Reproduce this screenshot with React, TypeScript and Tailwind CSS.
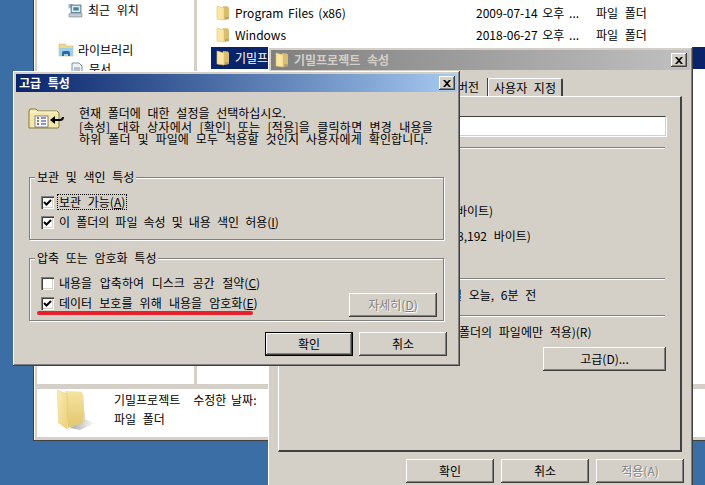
import React from "react";

const bevel = "shadow-[inset_-1px_-1px_#404040,inset_1px_1px_#ffffff,inset_-2px_-2px_#808080,inset_2px_2px_#d4d0c8]";
const fontCls = "font-['Noto_Sans_CJK_KR','Liberation_Sans',sans-serif] [word-spacing:4px] text-[12px] leading-[14px] text-black";

function Folder({ className = "" }: { className?: string }) {
  return (
    <svg viewBox="0 0 14 16" className={className}>
      <path d="M7 1 L12 1.5 L13 3 L13 14 L7 15 Z" fill="#d9bd6e" />
      <path d="M1 1 L8 3 L8 15 L1 14 Z" fill="#f8e6a2" />
      <path d="M1 1 L8 3 L8 15 L1 14 Z" fill="none" stroke="#e2c578" strokeWidth="0.6" />
      <path d="M9 12 L13 12 L13 14 L9 14.6 Z" fill="#b9a46a" />
    </svg>
  );
}

function CloseBtn({ className = "" }: { className?: string }) {
  return (
    <div className={`flex items-center justify-center bg-[#d4d0c8] w-[16px] h-[14px] ${bevel} ${className}`}>
      <svg viewBox="0 0 8 7" className="w-[8px] h-[7px]">
        <path d="M0 0 L2 0 L4 2 L6 0 L8 0 L5 3.5 L8 7 L6 7 L4 5 L2 7 L0 7 L3 3.5 Z" fill="#000" />
      </svg>
    </div>
  );
}

function Btn({ label, className = "", disabled = false, isDefault = false }: { label: React.ReactNode; className?: string; disabled?: boolean; isDefault?: boolean }) {
  return (
    <div className={`flex items-center justify-center h-[24px] w-[88px] bg-[#d4d0c8] ${isDefault ? "border border-black" : ""} ${bevel} ${disabled ? "text-[#808080] [text-shadow:1px_1px_#ffffff]" : ""} ${className}`}>
      {label}
    </div>
  );
}

function Check({ checked }: { checked: boolean }) {
  return (
    <div className="w-[13px] h-[13px] shrink-0 bg-white flex items-center justify-center shadow-[inset_1px_1px_#808080,inset_2px_2px_#404040,inset_-1px_-1px_#ffffff,inset_-2px_-2px_#d4d0c8]">
      {checked && (
        <svg viewBox="0 0 9 9" className="w-[9px] h-[9px]">
          <path d="M1 4 L3.5 6.5 L8 2" fill="none" stroke="#000" strokeWidth="2" />
        </svg>
      )}
    </div>
  );
}

function Group({ title, className = "", children }: { title: string; className?: string; children: React.ReactNode }) {
  return (
    <div className={`relative mx-[13px] border border-[#808080] shadow-[1px_1px_#ffffff,inset_1px_1px_#ffffff] ${className}`}>
      <div className="absolute left-[5px] top-[-8px] px-[2px] bg-[#d4d0c8]">{title}</div>
      {children}
    </div>
  );
}

function Row({ checked, focus, children, className = "" }: { checked: boolean; focus?: boolean; children: React.ReactNode; className?: string }) {
  return (
    <div className={`flex items-center gap-[4px] ${className}`}>
      <Check checked={checked} />
      <span className={focus ? "outline outline-1 outline-dotted outline-black px-px" : "px-px"}>{children}</span>
    </div>
  );
}

function Sep({ className = "" }: { className?: string }) {
  return <div className={`h-[2px] bg-[#808080] border-b border-white ${className}`} />;
}

export default function App() {
  return (
    <div className={`relative w-[705px] h-[485px] overflow-hidden bg-[#3a6ea5] ${fontCls}`}>
      {/* Explorer window */}
      <div className="absolute left-[33px] top-[-20px] w-[720px] h-[461px] bg-[#d4d0c8] border-l-[1px] border-b-[1px] border-[#404040] shadow-[inset_1px_0_#ffffff] pl-[3px] pb-[3px] flex flex-col">
        <div className="flex flex-1 min-h-0">
          <div className="w-[157px] bg-white shrink-0 pt-[23px] pl-[31px]">
            <div className="flex items-center gap-[5px] h-[14px]">
              <svg viewBox="0 0 14 14" className="w-[15px] h-[15px]">
                <rect x="0.5" y="1" width="4" height="4" fill="#9fb4c4" />
                <rect x="3" y="2" width="9" height="7" fill="#d8ecf4" stroke="#607888" />
                <rect x="5" y="4" width="5" height="3" fill="#4a7f98" />
                <path d="M1 10h12v3H1z" fill="#c4d0d8" stroke="#708090" strokeWidth="0.6" />
              </svg>
              <span>최근 위치</span>
            </div>
            <div className="flex items-center gap-[4px] h-[14px] mt-[26px] -ml-[10px]">
              <svg viewBox="0 0 16 14" className="w-[16px] h-[14px]">
                <path d="M1 1h6l1 2h7v10H1z" fill="#f0d890" stroke="#c8a860" strokeWidth="0.5" />
                <path d="M1 5h14v8H1z" fill="#9ed0ea" />
                <path d="M4 13v-3q0-2 2-2h4q2 0 2 2v3h-2v-2H6v2z" fill="#2c6aa4" />
              </svg>
              <span>라이브러리</span>
            </div>
            <div className="flex items-center gap-[5px] h-[14px] mt-[5px] ml-[2px]">
              <svg viewBox="0 0 14 14" className="w-[14px] h-[14px]">
                <path d="M2 1h7l3 3v9H2z" fill="#eef2f6" stroke="#8090a0" />
                <path d="M4 6h6M4 8h6M4 10h6" stroke="#8090a0" />
              </svg>
              <span>문서</span>
            </div>
          </div>
          <div className="w-[3px] shrink-0" />
          <div className="flex-1 bg-white pt-[22px]">
            <div className="flex items-center h-[22px] pl-[19px]">
              <Folder className="w-[14px] h-[16px]" />
              <span className="ml-[5px] w-[241px] [word-spacing:2px]">Program Files (x86)</span>
              <span className="w-[120px] [word-spacing:2px]">2009-07-14 오후 ...</span>
              <span>파일 폴더</span>
            </div>
            <div className="flex items-center h-[22px] pl-[19px]">
              <Folder className="w-[14px] h-[16px]" />
              <span className="ml-[5px] w-[241px]">Windows</span>
              <span className="w-[120px] [word-spacing:2px]">2018-06-27 오후 ...</span>
              <span>파일 폴더</span>
            </div>
            <div className="flex items-center h-[22px] mt-[1px] pl-[5px] ml-[14px] bg-[#0a246a] text-white">
              <Folder className="w-[14px] h-[16px]" />
              <span className="ml-[5px]">기밀프로젝트</span>
            </div>
          </div>
        </div>
        <div className="h-[48px] mt-[5px] bg-white shrink-0 flex">
          <svg viewBox="5 4 40 44" className="w-[40px] h-[44px] ml-[18px] shrink-0">
            <defs>
              <linearGradient id="shadowG" x1="0" y1="0" x2="1" y2="0">
                <stop offset="0" stopColor="#a8a8a8" />
                <stop offset="1" stopColor="#ffffff" />
              </linearGradient>
              <linearGradient id="backG" x1="0" y1="0" x2="0" y2="1">
                <stop offset="0" stopColor="#f5e3a0" />
                <stop offset="1" stopColor="#e2c66e" />
              </linearGradient>
              <linearGradient id="frontG" x1="0" y1="0" x2="1" y2="1">
                <stop offset="0" stopColor="#fbeeb4" />
                <stop offset="1" stopColor="#eccf7a" />
              </linearGradient>
            </defs>
            <path d="M20 43 L34 34 L45 38 L30 45 Z" fill="url(#shadowG)" />
            <path d="M15 6 L31.7 6.7 L33.3 10 L35 37 L18 43 Z" fill="url(#backG)" />
            <path d="M7.3 5 L17.3 9.3 L17.3 44 L8.7 38 Z" fill="url(#frontG)" stroke="#dcc070" strokeWidth="0.4" />
            <path d="M34 27 L35 37 L33 38 Z" fill="#d8d8d8" />
          </svg>
          <div className="ml-[19px] mt-[4px] flex flex-col gap-[5px]">
            <div className="flex [word-spacing:2px]">
              <span>기밀프로젝트</span>
              <span className="ml-[13px] whitespace-nowrap">수정한 날짜:</span>
            </div>
            <span>파일 폴더</span>
          </div>
        </div>
      </div>

      {/* Properties window */}
      <div className={`absolute left-[268px] top-[47px] w-[425px] h-[460px] bg-[#d4d0c8] p-[3px] ${bevel} flex flex-col`}>
        <div className="h-[20px] shrink-0 bg-gradient-to-r from-[#808080] to-[#c0c0c0] flex items-center pl-[4px] pr-[3px] text-[#d4d0c8] font-bold">
          <Folder className="w-[14px] h-[16px]" />
          <span className="ml-[5px]">기밀프로젝트 속성</span>
          <CloseBtn className="ml-auto" />
        </div>
        <div className="flex justify-end h-[26px] pr-[127px] items-end shrink-0">
          <div className="pr-[8px] h-[18px] flex items-center border-r border-[#404040]">버전</div>
          <div className="h-[18px] w-[75px] flex items-center justify-center border-t border-l border-white border-r-[2px] border-r-[#404040] rounded-t-[2px]">사용자 지정</div>
        </div>
        <div className="ml-[7px] mr-[8px] h-[356px] shrink-0 border-t border-l border-white border-r-[2px] border-b-[2px] border-r-[#404040] border-b-[#404040] flex flex-col pr-[14px]">
          <div className="mt-[19px] h-[20px] ml-[170px] bg-white border border-t-[#404040] border-l-[#404040] border-r-[#d4d0c8] border-b-[#d4d0c8] shadow-[1px_1px_#ffffff]" />
          <Sep className="mt-[11px] ml-[170px] mr-[1px]" />
          <div className="mt-[55px] ml-[177px] h-[14px]">바이트)</div>
          <div className="mt-[11px] ml-[178px] h-[14px]">8,192 바이트)</div>
          <Sep className="mt-[35px] ml-[170px] mr-[1px]" />
          <div className="mt-[8px] ml-[172px] h-[14px]">일 오늘, 6분 전</div>
          <Sep className="mt-[13px] ml-[170px] mr-[1px]" />
          <div className="mt-[8px] ml-[180px] h-[14px]">폴더의 파일에만 적용)(R)</div>
          <div className="mt-[8px] flex justify-end">
            <Btn label="고급(D)..." className="w-[123px]" />
          </div>
        </div>
        <div className="flex justify-end gap-[7px] mt-[7px] pr-[6px]">
          <Btn label="확인" />
          <Btn label="취소" />
          <Btn label="적용(A)" disabled />
        </div>
      </div>

      {/* Advanced attributes dialog */}
      <div className={`absolute left-[13px] top-[71px] w-[447px] h-[295px] bg-[#d4d0c8] p-[3px] ${bevel} flex flex-col`}>
        <div className="h-[18px] shrink-0 bg-gradient-to-r from-[#0a246a] to-[#a6caf0] flex items-center pl-[3px] pr-[2px] text-white font-bold">
          <span>고급 특성</span>
          <CloseBtn className="ml-auto" />
        </div>
        <div className="flex mt-[14px] pl-[11px] h-[48px]">
          <svg viewBox="0 0 37 22" className="w-[37px] h-[22px] mt-[1px] shrink-0">
            <path d="M2 4 L3 2 H9 L11 4 H30 L32 6 V20 L31 21 H2 Z" fill="#f5e7a8" stroke="#8a7a3a" />
            <path d="M3 5 H30" stroke="#fff8d8" />
            <rect x="8" y="9" width="13" height="11" fill="#fff" stroke="#555" strokeWidth="0.7" />
            <path d="M10 11h2" stroke="#c02020" strokeWidth="1.4" />
            <path d="M10 14h2" stroke="#208030" strokeWidth="1.4" />
            <path d="M10 17h2" stroke="#a02020" strokeWidth="1.4" />
            <path d="M14 11h5M14 14h5M14 17h5" stroke="#203080" strokeWidth="1.2" />
            <path d="M36 10 q0 3 -3 3 H25" fill="none" stroke="#000" strokeWidth="2" />
            <path d="M28 9 L23 13 L28 17 Z" fill="#000" />
          </svg>
          <div className="ml-[15px] flex flex-col">
            <div>현재 폴더에 대한 설정을 선택하십시오.</div>
            <div className="mt-[1px] leading-[12px] tracking-[0.3px] whitespace-nowrap">[속성] 대화 상자에서 [확인] 또는 [적용]을 클릭하면 변경 내용을</div>
            <div className="leading-[12px] tracking-[0.15px] whitespace-nowrap">하위 폴더 및 파일에 모두 적용할 것인지 사용자에게 확인합니다.</div>
          </div>
        </div>
        <Group title="보관 및 색인 특성" className="mt-[23px] h-[63px]">
          <Row checked focus className="mt-[17px] ml-[11px]">보관 가능(<u>A</u>)</Row>
          <Row checked className="mt-[6px] ml-[11px]"><span className="[word-spacing:3.4px]">이 폴더의 파일 속성 및 내용 색인 허용(<u>I</u>)</span></Row>
        </Group>
        <Group title="압축 또는 암호화 특성" className="mt-[18px] h-[63px]">
          <Row checked={false} className="mt-[17px] ml-[11px]"><span className="[word-spacing:5px]">내용을 압축하여 디스크 공간 절약(<u>C</u>)</span></Row>
          <Row checked className="mt-[6px] ml-[11px]"><span className="[word-spacing:4.5px]">데이터 보호를 위해 내용을 암호화(<u>E</u>)</span></Row>
          <Btn label={<span>자세히(<u>D</u>)</span>} disabled className="absolute right-[6px] top-[34px]" />
          <div className="absolute left-[7px] top-[52px] w-[216px] h-[4px] rounded-full bg-[#e8202c]" />
        </Group>
        <div className="flex justify-end gap-[6px] mt-[11px] pr-[10px]">
          <Btn label="확인" isDefault />
          <Btn label="취소" />
        </div>
      </div>
    </div>
  );
}
